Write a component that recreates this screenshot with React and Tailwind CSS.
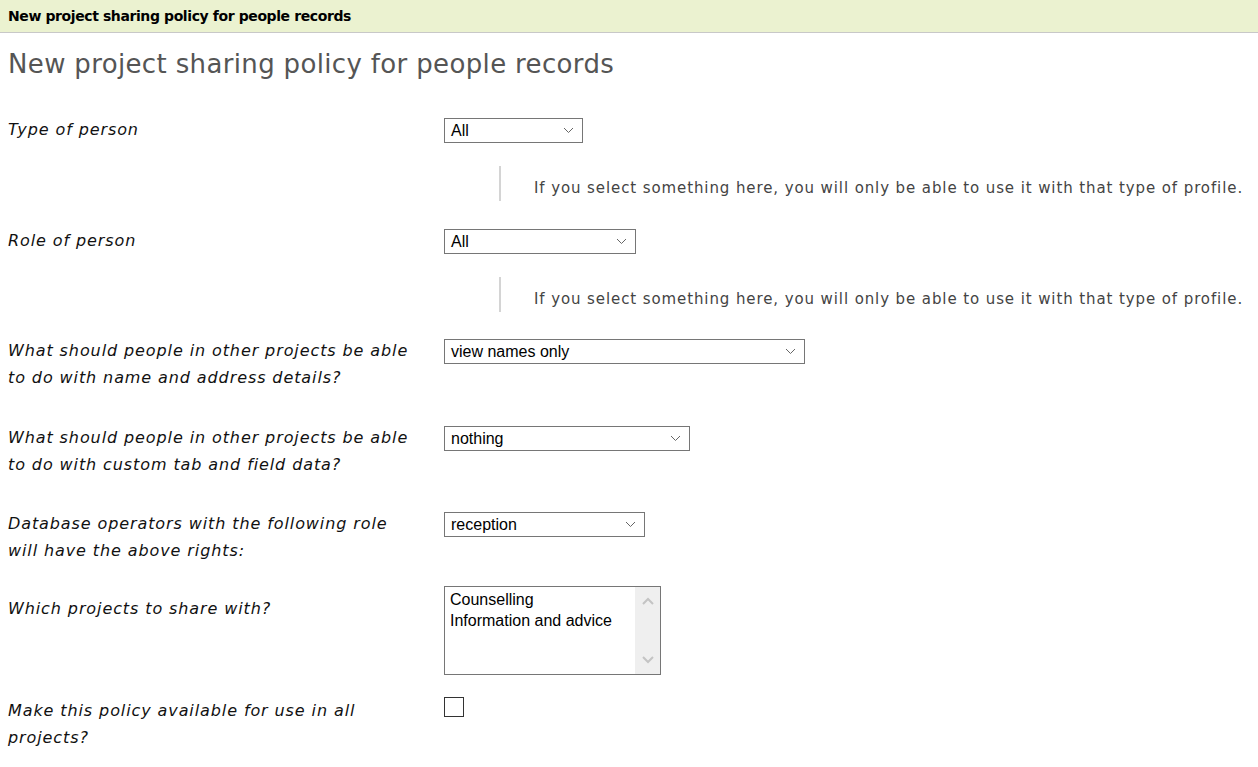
import React from 'react';

const Chevron = () => (
  <svg width="11" height="7" viewBox="0 0 11 7" className="shrink-0">
    <path d="M1 1 L5.5 5.5 L10 1" fill="none" stroke="#666" strokeWidth="1" />
  </svg>
);

function Select({ value, width }) {
  return (
    <div
      className="mt-[2px] h-[25px] border border-[#767676] bg-white flex items-center justify-between pl-[6px] pr-[8px] text-[16px] text-black font-['Liberation_Sans',Arial,sans-serif]"
      style={{ width }}
    >
      <span className="leading-none">{value}</span>
      <Chevron />
    </div>
  );
}

function Hint() {
  return (
    <div className="mt-[23px] ml-[55px] flex items-start h-[35px]">
      <div className="w-[2px] h-[35px] bg-[#d4d4d4]" />
      <p className="ml-[33px] mt-[12px] leading-[20px] text-[15px] tracking-[0.9px] text-[#444] font-['DejaVu_Sans',Verdana,sans-serif] whitespace-nowrap">
        If you select something here, you will only be able to use it with that type of profile.
      </p>
    </div>
  );
}

function Row({ label, children, className = '', labelClass = '' }) {
  return (
    <div className={`grid grid-cols-[436px_1fr] ${className}`}>
      <div className={`italic text-[16px] leading-[27px] tracking-[0.9px] text-[#111] pr-2 ${labelClass}`}>{label}</div>
      <div>{children}</div>
    </div>
  );
}

export default function App() {
  return (
    <div className="min-h-[767px] bg-white font-['DejaVu_Sans',Verdana,sans-serif]">
      <div className="h-[33px] bg-[#ebf2d0] border-b border-[#c8c8c8] flex items-center px-2">
        <h2 className="font-bold text-[14px] text-black tracking-[-0.4px]">New project sharing policy for people records</h2>
      </div>
      <div className="px-2">
        <h1 className="mt-[14px] text-[26px] leading-[34px] tracking-[0.35px] text-[#555] font-['DejaVu_Sans',Tahoma,sans-serif]">
          New project sharing policy for people records
        </h1>

        <Row label="Type of person" className="mt-[35px]">
          <Select value="All" width={139} />
          <Hint />
        </Row>

        <Row label="Role of person" className="mt-[26px]">
          <Select value="All" width={192} />
          <Hint />
        </Row>

        <Row label={<>What should people in other projects be able<br />to do with name and address details?</>} className="mt-[25px]">
          <Select value="view names only" width={361} />
        </Row>

        <Row label={<>What should people in other projects be able<br />to do with custom tab and field data?</>} className="mt-[33px]">
          <Select value="nothing" width={246} />
        </Row>

        <Row label={<>Database operators with the following role<br />will have the above rights:</>} className="mt-[32px]">
          <Select value="reception" width={201} />
        </Row>

        <Row label="Which projects to share with?" className="mt-[20px]" labelClass="pt-[11px]">
          <div className="mt-[2px] w-[217px] h-[89px] border border-[#767676] bg-white flex font-['Liberation_Sans',Arial,sans-serif] text-[16px] text-black">
            <div className="flex-1 pl-[5px] pt-[2px] leading-[21px]">
              <div>Counselling</div>
              <div>Information and advice</div>
            </div>
            <div className="w-[25px] bg-[#efefef] flex flex-col justify-between items-center py-[10px]">
              <svg width="12" height="8" viewBox="0 0 12 8"><path d="M1 7 L6 2 L11 7" fill="none" stroke="#c4c4c4" strokeWidth="2" /></svg>
              <svg width="12" height="8" viewBox="0 0 12 8"><path d="M1 1 L6 6 L11 1" fill="none" stroke="#c4c4c4" strokeWidth="2" /></svg>
            </div>
          </div>
        </Row>

        <Row label={<>Make this policy available for use in all<br />projects?</>} className="mt-[22px]">
          <div className="w-[20px] h-[20px] border border-[#333] bg-white" />
        </Row>
      </div>
    </div>
  );
}
